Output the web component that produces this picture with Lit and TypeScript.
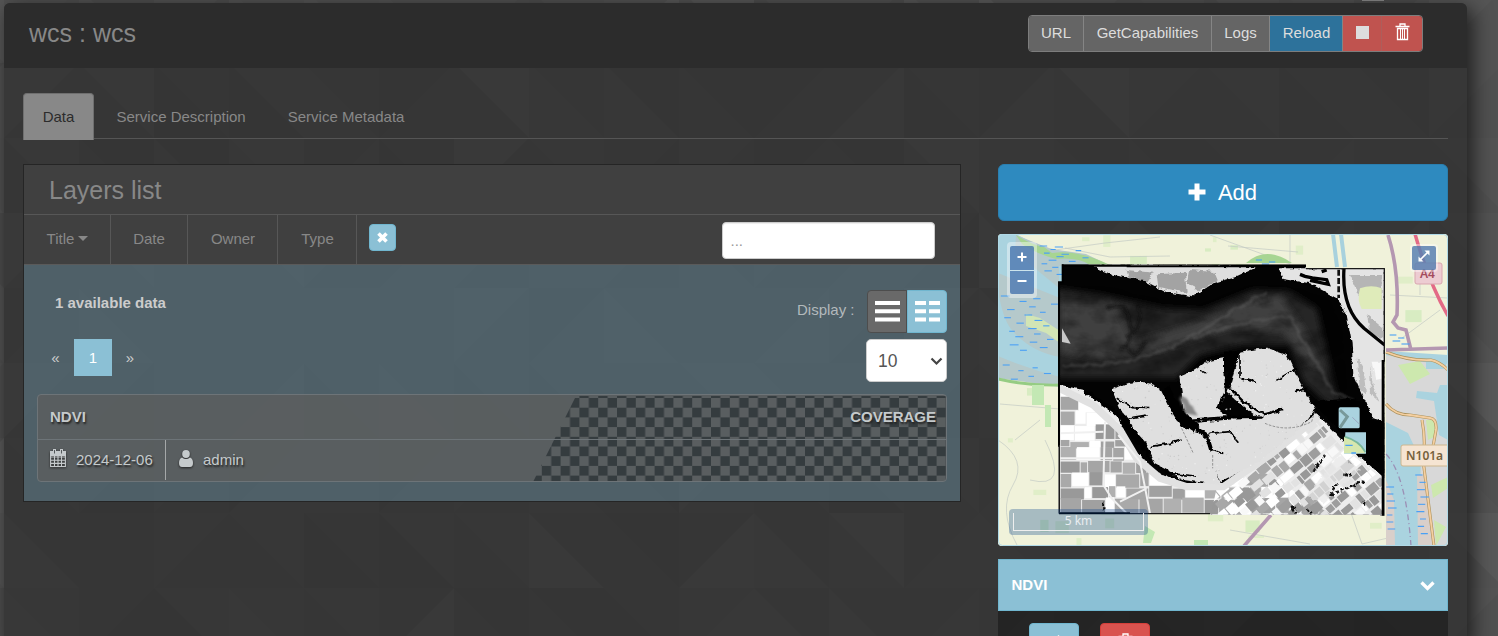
import { LitElement, html, svg, css } from "lit";
import { customElement } from "lit/decorators.js";

/* Small seeded generator so field patterns are stable between renders. */
function seeded(seed: number) {
  let s = seed;
  return () => {
    s = (s * 1664525 + 1013904223) % 4294967296;
    return s / 4294967296;
  };
}

@customElement("triangle-backdrop")
class TriangleBackdrop extends LitElement {
  static styles = css`
    :host { display: block; position: absolute; inset: 0; overflow: hidden; }
    svg { display: block; }
  `;
  render() {
    const rnd = seeded(41);
    const tris = [];
    const c = 75;
    for (let row = 0; row < 9; row++) {
      for (let col = -1; col < 20; col++) {
        const x = 4 + col * c;
        const y = -12 + row * c;
        const kind = Math.floor(rnd() * 4);
        const p = [
          `${x},${y} ${x + c},${y} ${x},${y + c}`,
          `${x},${y} ${x + c},${y} ${x + c},${y + c}`,
          `${x},${y + c} ${x + c},${y} ${x + c},${y + c}`,
          `${x},${y} ${x + c},${y + c} ${x},${y + c}`,
        ][kind];
        tris.push(svg`<rect x=${x} y=${y} width=${c} height=${c} fill="#fff" opacity=${rnd() * 0.016}/>
          <polygon points=${p} fill=${rnd() > 0.5 ? "#fff" : "#000"} opacity=${0.01 + rnd() * 0.045}/>`);
      }
    }
    return html`<svg width="1498" height="636">${tris}</svg>`;
  }
}

@customElement("coverage-map")
class CoverageMap extends LitElement {
  static styles = css`
    :host { display: block; position: relative; height: 312px; border-radius: 4px; overflow: hidden; background: #b5dbe8; }
    .canvas { display: block; width: 450px; height: 312px; }
    .zoom { position: absolute; left: 9px; top: 8px; width: 24px; padding: 4px 3px; border-radius: 4px; background: rgba(255,255,255,.4); display: flex; flex-direction: column; gap: 1px; }
    .ctl { display: grid; place-items: center; height: 24px; background: rgba(60,108,170,.75); border-radius: 2px 2px 0 0; padding-bottom: 2px; box-sizing: border-box; }
    .ctl.low { border-radius: 0 0 2px 2px; height: 23px; }
    .full { position: absolute; left: 412px; top: 10px; width: 24px; padding: 2px; border-radius: 4px; background: rgba(255,255,255,.4); }
    .full .ctl { border-radius: 2px; background: rgba(68,112,168,.75); padding-bottom: 4px; }
    .scale { position: absolute; left: 11px; top: 275px; width: 131px; height: 18px; padding: 4px; border-radius: 4px; background: rgba(0,60,136,.3); }
    .bar { border: 1px solid #eee; border-top: none; height: 17px; font: 12px/15px "Noto Sans", sans-serif; color: #e9edf1; text-align: center; }
  `;

  fields() {
    const rnd = seeded(77);
    const greys = ["#999", "#a5a5a5", "#b0b0b0", "#fff", "#a9a9a9", "#fff", "#a0a0a0"];
    const out = [];
    for (let y = 400; y < 775; ) {
      const h = 16 + rnd() * 32;
      for (let x = 32; x < 840; ) {
        const w = 22 + rnd() * 52;
        out.push(svg`<rect x=${x} y=${y + rnd() * 9} width=${w - 3} height=${h - 2} fill=${greys[Math.floor(rnd() * 7)]}/>`);
        x += w;
      }
      y += h;
    }
    return out;
  }

  diagonal() {
    const rnd = seeded(13);
    const greys = ["#989898", "#a8a8a8", "#f8f8f8", "#e2e2e2", "#fff", "#9e9e9e"];
    const out = [];
    for (let y = -30; y < 400; y += 32) {
      for (let x = -120; x < 520; ) {
        const w = 12 + rnd() * 30;
        out.push(svg`<rect x=${x} y=${y + rnd() * 7} width=${w - 3} height=${20 + rnd() * 10} fill=${greys[Math.floor(rnd() * 6)]}/>`);
        x += w;
      }
    }
    return out;
  }

  dashes(seed: number, n: number, x0: number, y0: number, w: number, h: number) {
    const rnd = seeded(seed);
    for (let k = 0; k < 5; k++) rnd();
    return Array.from({ length: n }, (_, i) => {
      const x = x0 + (((i * 0.618 + rnd() * 0.15) % 1) * w);
      const y = y0 + (h * i) / n;
      return svg`<path d="M${x} ${y}h${5 + rnd() * 4}" stroke="#4aa0f5" stroke-width="1.1"/>`;
    });
  }

  patches() {
    const rnd = seeded(8);
    return Array.from({ length: 75 }, () => svg`<rect x=${998 + rnd() * 440} y=${234 + rnd() * 305} width=${3 + rnd() * 14} height=${2 + rnd() * 10} fill=${rnd() > 0.3 ? "#d9edc0" : "#cdeab8"} opacity=".7"/>`);
  }

  specks() {
    const rnd = seeded(29);
    return Array.from({ length: 420 }, () => svg`<circle cx=${190 + rnd() * 600} cy=${285 + rnd() * 400} r=${0.8 + rnd() * 1.6} fill=${rnd() > 0.4 ? "#cacaca" : "#f0f0f0"}/>`);
  }

  render() {
    return html`
      <svg class="canvas" viewBox="998 234 450 312">
        <defs>
          <clipPath id="frame"><path d="M36 28H768V40H1004V782H990V779H480V776H25V82H36Z"/></clipPath>
          <clipPath id="left"><path d="M28 395L120 445L200 500L240 580L300 645L400 700L510 706L640 650L860 790H20Z"/></clipPath>
          <clipPath id="right"><path d="M500 700L620 635L800 490L870 570L1000 675V790H480Z"/></clipPath>
          <clipPath id="flats"><path d="M190 410Q230 375 285 385Q340 400 360 450L395 515 430 520 470 540 485 600 620 625 510 690 400 670 320 630 285 560 240 510 210 460zM388 365Q430 350 465 320L523 310 525 425 400 460zM570 290L650 278 710 300 735 355 795 465 740 530 620 625 510 680 490 620 540 360z"/></clipPath>
          <filter id="soft" x="-20%" y="-20%" width="140%" height="140%"><feGaussianBlur stdDeviation="10"/></filter>
          <filter id="wisp" x="-20%" y="-20%" width="140%" height="140%"><feTurbulence type="fractalNoise" baseFrequency=".03" numOctaves="3" seed="4"/><feDisplacementMap in="SourceGraphic" scale="22" xChannelSelector="R" yChannelSelector="G"/><feGaussianBlur stdDeviation="3"/></filter>
          <filter id="edge" x="-5%" y="-5%" width="110%" height="110%"><feTurbulence type="fractalNoise" baseFrequency=".06" numOctaves="3" seed="4"/><feDisplacementMap in="SourceGraphic" scale="14" xChannelSelector="R" yChannelSelector="G"/></filter>
          <filter id="haze" x="0" y="0" width="100%" height="100%"><feTurbulence type="fractalNoise" baseFrequency=".012 .02" numOctaves="4" seed="9"/><feColorMatrix values="0 0 0 0 0  0 0 0 0 0  0 0 0 0 0  2.4 0 0 0 -.9"/></filter>
          <mask id="body"><path d="M36 110L170 115L330 150L440 175L600 110L720 110L830 150L860 240L870 400L840 430L770 380L710 280H590L450 300L370 360L200 360L36 360Z" fill="#fff" filter="url(#soft)"/></mask>
        </defs>
        <rect x="998" y="234" width="450" height="312" fill="#f0f2da"/>
        ${this.patches()}
        <path d="M1010 238l45 12 50-7 55-6M1065 248l45 9 60-1M1210 235l80 29M1228 246l70 6M1290 235v30M1040 420l-25 20M1000 404l60 5M998 440q30 20 15 45t4 60M1030 480q40 10 15-40M1230 530l80 14M1350 510l12 34M1362 544l26-6M1390 295l58 3M1440 310l-38 28M1420 265v30" fill="none" stroke="#c3cac4" stroke-width=".7"/>
        <!-- western estuary -->
        <path d="M998 234h18l32 17 18 6 45 8-51 120-62-7z" fill="#aad3df"/>
        <path d="M1016 235l35 14 35 5 25 12h-52v22l-22-18-22-17zM998 273q25 10 62 25v59q-30-5-49-28-8-10-13-38zM998 356q30 13 62 21v10l-62-9z" fill="#b5c9cb"/>
        <path d="M1016 235q16 10 28 12l8 6q25-4 58 12h-20q-12-8-34-6-22-6-34-15" fill="#a7d592"/>
        <path d="M998 379q30 7 63 6" fill="none" stroke="#95cc83" stroke-width="3"/>
        <path d="M1026 314l14 4 20 13v12l-14-10-20-7z" fill="#d2e5b5"/>
        ${this.dashes(3, 9, 1037, 246, 20, 32)}
        ${this.dashes(6, 21, 1000, 296, 52, 57)}
        ${this.dashes(5, 6, 1000, 365, 50, 17)}
        ${this.dashes(15, 5, 1050, 247, 38, 18)}
        <!-- northern shore and canals -->
        <path d="M1246 263q20-18 46 0z" fill="#a7d592"/>
        <path d="M1333 234l4 33M1341 234l4 33" stroke="#a8d1dd" stroke-width="4"/>
        <!-- eastern town, river and roads -->
        <path d="M1386 352l62 7v187h-28l-34-90z" fill="#d8d8d8"/>
        <path d="M1386 351l62 4v9l-25-2-37-7z" fill="#aad3df"/>
        <path d="M1386 422l22 11 13 28-3 85h-24l-2-30-6-22z" fill="#aad3df"/>
        <path d="M1417 391l20 2 3-8h8v55l-9-5-5-34-18-3zM1426 359h20v10h-20z" fill="#aad3df"/>
        <path d="M1417 475h9l7 70h-15zM1386 480l8 20 1 45h-9z" fill="#d9cfca"/>
        <path d="M1398 365l22-4 10 13-20 10zM1426 420h10v16l-8 4zM1431 485l17-8v11l-15 10zM1434 520l12 7-10 19z" fill="#cde8ae"/>
        <path d="M1386 404q9 11 24 11l20 3q7 1 6 12l-4 22M1422 420q4 20 1 40l11 86M1386 352q22 9 45 8 9 2 17 10" fill="none" stroke="#ad925c" stroke-width="3"/>
        <path d="M1386 404q9 11 24 11l20 3q7 1 6 12l-4 22M1422 420q4 20 1 40l11 86M1386 352q22 9 45 8 9 2 17 10" fill="none" stroke="#f5cfa0" stroke-width="1.8"/>
        <path d="M1388 235q11 34 9 80l-4 7 5 6 8 2 5 20M1386 350l62-2M1244 546l27-31" fill="none" stroke="#b497b1" stroke-width="3.6"/>
        <path d="M1386 454q20 21 25 92" fill="none" stroke="#9b8fb5" stroke-width="1.3" stroke-dasharray="6 3 1 3"/>
        <path d="M1415 234q14 49 33 82" fill="none" stroke="#e36a86" stroke-width="3.5"/>
        ${this.dashes(31, 7, 1386, 487, 2, 49)}
        ${this.dashes(33, 9, 1415, 475, 6, 66)}
        ${this.dashes(35, 4, 1388, 335, 14, 12)}
        ${this.dashes(37, 3, 1255, 260, 20, 6)}
        <path d="M1032 385h12v20h-12zM1045 405h6v22h-6zM1145 526l10 6-4 11h-8zM1194 540h14v6h-14z" fill="#c3e8b4"/>
        <rect x="1415" y="263" width="27" height="21" rx="2" fill="#edccd2" stroke="#d9a6b0"/>
        <text x="1420" y="278" font-family="Noto Sans" font-size="12" font-weight="600" fill="#a34b5d">A4</text>
        <rect x="1401" y="445" width="50" height="21" rx="2" fill="#f5e4d2" stroke="#cdb68e"/>
        <text x="1406" y="460" font-family="Noto Sans" font-size="12" font-weight="600" fill="#76613c">N101a</text>
        <!-- coverage raster -->
        <g transform="translate(1050 255) scale(.33333)">
          <g clip-path="url(#frame)">
            <rect x="20" y="20" width="990" height="770" fill="#030303"/>
            <g filter="url(#soft)">
              <path d="M20 100L160 120L340 160L460 165L610 105L720 110L800 160L860 420L910 440L830 445L760 380L720 270H580L450 300L380 370L190 370L20 370Z" fill="#262626"/>
              <path d="M30 140L190 140L250 260L420 210L560 150L690 120L760 220L820 340L780 330L700 230L540 220L330 285L140 310L30 290Z" fill="#404040"/>
            </g>
            <g mask="url(#body)"><rect x="20" y="60" width="900" height="400" filter="url(#haze)" opacity=".35"/></g>
            <path d="M165 160q60-30 75 40t-30 80M260 150q30 50-30 100M220 270q40 50 70-10" fill="none" stroke="#101010" stroke-width="10" opacity=".6" filter="url(#wisp)"/>
            <path d="M40 330Q260 345 430 240T650 110M430 250Q600 190 720 185Q780 290 850 410l60 25" fill="none" stroke="#777" stroke-width="7" opacity=".35" filter="url(#wisp)"/>
            <path d="M36 220l26 46-26-5z" fill="#c8c8c8"/>
            <g filter="url(#edge)">
              <path d="M110 28L190 60 285 78 350 112 430 124 490 85 560 65 620 37 465 31z" fill="#dedede"/>
              <path d="M230 45l80 8-20 27-55-14zM320 58l85-5 5 60-85-17zM418 45l75 6 10 25-55 30-38-20z" fill="#a3a3a3"/>
              <path d="M690 40H1004V500L970 490 940 430 910 360 905 260 890 180 860 130 780 85 700 72z" fill="#e4e4e4"/>
              <path d="M900 60h95v75h-60zM950 180l50 40v30l-35-10z" fill="#b5b5b5"/>
              <path d="M920 310l20 20 8 90-18-15zM960 330l8 60 20 50-25-20z" fill="#bdbdbd"/>
              <path d="M965 320h36v50l-25 5z" fill="#f8f8f8"/>
              <path d="M20 388L100 405 200 480 240 570 310 645 410 690 510 700 620 620 740 530 800 475 870 550 1010 670V790H15z" fill="#ececec"/>
            </g>
            <g clip-path="url(#left)">${this.fields()}</g>
            <g clip-path="url(#right)"><g transform="translate(500 650) rotate(-40)">${this.diagonal()}</g></g>
            <path d="M28 400L130 450L210 525L260 610L330 670L410 695H520L660 600L805 485" fill="none" stroke="#e1e1e1" stroke-width="22"/>
            <path d="M165 500L160 690 185 730 230 775M205 540L270 620 300 775M30 535L160 530M30 610h190M210 740l80-40" fill="none" stroke="#f0f0f0" stroke-width="6"/>
            <path d="M870 600l60 45-110 100-50-20 60-80z" fill="#e9e9e9" opacity=".7" filter="url(#edge)"/>
            <g filter="url(#edge)" fill="#dfdfdf">
              <path d="M186 406Q230 375 285 382Q340 395 356 440L392 515L440 530 480 560 510 690 400 675 320 635 285 560 240 510 210 460z"/>
              <path d="M388 365Q430 350 465 320L523 310 525 425 507 460 530 485 430 500 400 460 395 410z"/>
              <path d="M570 290L650 278 710 300 735 355 760 400 795 465 740 530 620 625 510 680 490 620 470 535 430 505 620 485 530 410 545 360z"/>
            </g>
            <g clip-path="url(#flats)">${this.specks()}</g>
            <path d="M393 420l35 35 15 30-40-8z" fill="#888" filter="url(#wisp)"/>
            <g fill="none" stroke="#030303" filter="url(#edge)">
              <path d="M105 408L190 465 225 500" stroke-width="12"/>
              <path d="M215 480L250 540 285 580" stroke-width="20"/>
              <path d="M280 570L305 625 370 660" stroke-width="8"/>
              <path d="M345 400L370 450 395 490 440 520 " stroke-width="30"/>
              <path d="M430 515L470 540 485 590" stroke-width="12"/>
              <path d="M540 400L580 440 640 478 700 462M525 415L505 460 550 490 640 488 560 485 410 495" stroke-width="7"/>
              <path d="M560 290L530 400" stroke-width="16"/>
              <path d="M535 290v60" stroke-width="26"/>
              <path d="M570 300v70l50 12M475 535l65-5 25 30M480 585l40 10M300 575l60-10 35-10M350 655l90 8M200 430l50 28 45 3M230 490l60-10M680 375l60-35M735 410l35-10M450 345l20 12" stroke-width="5"/>
            </g>
            <path d="M395 520l35 75M488 600v40M645 505q70 30 140-5l10-35" fill="none" stroke="#777" stroke-width="2.2" stroke-dasharray="8 4"/>
            <path d="M882 40q-8 120 60 180l62 50" fill="none" stroke="#020202" stroke-width="10"/>
            <path d="M866 44v85" fill="none" stroke="#111" stroke-width="8" stroke-dasharray="18 7"/>
            <path d="M750 58l15 6 22 5M780 68l50 6 5 14-55-12M815 50l15-5" fill="none" stroke="#000" stroke-width="10"/>
            <path d="M930 100q35-12 65 0v62h-60q-15-25-5-62" fill="#dfebba"/>
            <path d="M785 440l85 90 60 75 74 65V500l-35-5-20-55-50-10z" fill="#060606" filter="url(#edge)"/>
            <path d="M790 650l35-50M840 720l20-35M840 720l110-45M880 655l25 8M942 740v15M728 755l8 20M770 760l15 18M160 740v30" stroke="#111" fill="none" stroke-width="7" stroke-dasharray="12 5" filter="url(#edge)"/>
          </g>
          <path d="M38 28V82H27V575M27 775H240M230 34H768M36 32H240" fill="none" stroke="#000" stroke-width="6"/>
          <path d="M28 570V775M240 776H480M768 41H1004M1003 40V320" fill="none" stroke="#1a1a1a" stroke-width="4"/>
          <path d="M999 315V782" fill="none" stroke="#000" stroke-width="8"/>
          <rect x="866" y="457" width="63" height="63" rx="5" fill="#aad3df"/>
          <path d="M870 465l22 20-22 33" fill="none" stroke="#78999a" stroke-width="9"/>
          <path d="M907 487l22 21" stroke="#9292b2" stroke-width="2"/>
          <path d="M886 532h62v64h-66z" fill="#aad3df"/>
          <path d="M882 545q50 15 64 50h-64z" fill="#d6e7ae"/>
          <path d="M884 545q45 13 62 46" fill="none" stroke="#79b79b" stroke-width="5"/>
          <path d="M886 571h22M904 594h14" stroke="#4aa0f5" stroke-width="4"/>
        </g>
        <rect x="998.5" y="234.5" width="449" height="311" rx="4" fill="none" stroke="#afd9e7"/>
      </svg>
      <div class="zoom">
        <div class="ctl"><svg width="10" height="10"><path d="M5 .5v9M.5 5h9" stroke="#fff" stroke-width="2"/></svg></div>
        <div class="ctl low"><svg width="10" height="10"><path d="M.5 4h9" stroke="#fff" stroke-width="2"/></svg></div>
      </div>
      <div class="full"><div class="ctl"><svg width="12" height="12" viewBox="0 0 12 12"><path d="M2 10L10 2" stroke="#fff" stroke-width="1.7"/><path d="M6.5.5h5v5zM.5 6.5v5h5z" fill="#fff"/></svg></div></div>
      <div class="scale"><div class="bar">5 km</div></div>`;
  }
}

@customElement("app-root")
class AppRoot extends LitElement {
  static styles = css`
    :host { display: block; position: relative; box-sizing: border-box; height: 636px; overflow: hidden; padding: 3px 31px 0 4px; background: #505050; font: 15px/21px "Liberation Sans", Arial, sans-serif; color: #888; }
    * { box-sizing: border-box; }
    svg { display: block; }
    .peek { position: absolute; left: 1362px; top: 0; width: 22px; height: 1px; background: #8a8a8a; }
    .panel { position: relative; height: 640px; border-radius: 6px 6px 0 0; background: rgba(45,45,45,.72); box-shadow: 5px 5px 20px rgba(0,0,0,.65); }
    header { height: 65px; padding: 12px 44px 0 25px; display: flex; justify-content: space-between; align-items: flex-start; background: #2c2c2c; border-radius: 6px 6px 0 0; }
    h1 { margin: 0; padding-top: 3px; font-size: 25px; line-height: 30px; font-weight: 400; }
    .actions { display: flex; width: 395px; height: 37px; border: 1px solid #7d7d7d; border-radius: 4px; overflow: hidden; color: #ddd; }
    .actions > div { display: grid; place-items: center; border-right: 1px solid #858585; background: #656565; padding-bottom: 2px; }
    .actions .url { width: 55px; } .actions .cap { width: 128px; } .actions .logs { width: 58px; }
    .actions .reload { width: 73px; background: #2d729b; padding-left: 1px; }
    .actions .stop { width: 39px; background: #c0534f; border-color: #ad5e5b; }
    .actions .trash { flex: 1; background: #c0534f; border: none; padding-bottom: 3px; }
    .square { width: 13px; height: 13px; background: #ddd; }
    .body { padding: 26px 19px 0; }
    .tabs { display: flex; height: 45px; border-bottom: 1px solid #555; }
    .tab { width: 71px; padding-top: 12px; text-align: center; border: 1px solid #6f6f6f; border-bottom: none; border-radius: 4px 4px 0 0; background: #888; color: #2c2c2c; margin-top: -1px; height: 47px; }
    .link { padding-top: 12px; margin-left: 22.5px; }
    .link + .link { margin-left: 42px; }
    .columns { display: grid; grid-template-columns: 938px 450px; justify-content: space-between; margin-top: 25px; }
    .layers { height: 338px; border: 1px solid #252525; }
    .layers h2 { margin: 0; height: 50px; padding: 10px 25px 0; background: #404040; border-bottom: 1px solid #575757; font-size: 25px; line-height: 31px; font-weight: 400; }
    .filters { display: flex; height: 50px; background: #404040; border-bottom: 1px solid #5a5a5a; padding-right: 25px; }
    .filters > .f { border-right: 1px solid #575757; padding: 13px 0 0 1px; text-align: center; }
    .filters > .f2 { padding-left: 0; }
    .f1 { width: 87px; } .f2 { width: 77px; } .f3 { width: 90px; } .f4 { width: 79px; }
    .f1 i { display: inline-block; border: 5px solid transparent; border-top-color: #888; border-bottom: 0; vertical-align: 3px; margin-left: 4px; }
    .clear { width: 27px; height: 27px; margin: 9px 0 0 12px; display: grid; place-items: center; background: #8bc0d5; border: 1px solid #70b6cf; border-radius: 4px; }
    .search { width: 213px; height: 37px; margin: 7px 0 0 auto; border: 1px solid #ccc; border-radius: 4px; background: #fff; color: #999; padding: 7px 7.5px; box-shadow: inset 0 1px 1px rgba(0,0,0,.075); }
    .list { height: 236px; padding: 25px 13px 0; background: rgba(103,138,153,.5); }
    .top { display: flex; align-items: flex-start; color: #b3b9bc; }
    .top b { padding: 2px 0 0 18px; color: #ccc; }
    .display { margin: 9px 12.5px 0 auto; }
    .toggle { display: flex; width: 80px; height: 43px; }
    .toggle > div { width: 40px; display: grid; place-items: center; padding-left: 1px; }
    .rows { background: #696969; border: 1px solid #4d4d4d; border-radius: 4px 0 0 4px; }
    .cells { background: #8bc0d5; border: 1px solid #70b6cf; border-radius: 0 4px 4px 0; }
    .paging { display: flex; margin-top: 6px; color: #ccc; }
    .paging span { width: 37px; padding-top: 8px; text-align: center; }
    .paging .cur { width: 38px; height: 37px; background: #8bc0d5; color: #fff; }
    .paging .next { width: 36px; }
    .size { width: 81px; height: 43px; margin-left: auto; display: flex; align-items: center; justify-content: space-between; padding: 1px 3px 0 11px; border: 1px solid #ccc; border-radius: 5px; background: #fff; color: #555; font-size: 17.5px; }
    .item { position: relative; height: 88px; margin-top: 12px; width: 910px; border: 1px solid #6d7478; border-radius: 4px; background: rgba(98,92,90,.55); overflow: hidden; color: #c5cacc; text-shadow: 1px 2px 2px #222; }
    .checker { position: absolute; right: 0; top: 1px; }
    .head, .meta { position: relative; display: flex; }
    .head { height: 45px; padding: 11px 10px 0 12px; justify-content: space-between; border-bottom: 1px solid #6d7478; font-weight: 700; }
    .date { display: flex; gap: 10px; width: 128px; height: 40px; padding: 9px 0 0 12px; border-right: 1px solid #a5a8a9; }
    .user { display: flex; gap: 10px; padding: 9px 0 0 13px; }
    .ico { filter: drop-shadow(0 1px 1px #222); }
    .add { height: 57px; margin-bottom: 13px; display: flex; align-items: center; justify-content: center; gap: 12px; border: 1px solid #2a7fb0; border-radius: 6px; background: #2e8abf; color: #fff; font-size: 22px; padding: 0 1px 1px 0; }
    .bar { display: flex; align-items: center; justify-content: space-between; height: 52px; margin-top: 13px; padding: 0 12.5px 1px; background: #8bc0d5; border: 1px solid #70b6cf; color: #fff; font-weight: 700; }
    .tools { display: flex; gap: 21px; height: 60px; padding: 12px 31px; background: rgba(28,28,28,.65); }
    .tools > div { width: 50px; height: 37px; border-radius: 4px; background: #8bc0d5; border: 1px solid #70b6cf; display: grid; place-items: start center; padding-top: 9px; }
    .tools .del { background: #d9534f; border-color: #d43f3a; }
  `;

  trash() {
    return svg`<g fill="none" stroke="#fff"><path d="M5 3V1h5v2M.5 3.5h14M2.5 5.5v11h10v-11z" stroke-width="1.3"/><path d="M5.5 6v10M7.5 6v10M9.500 6v10" stroke-width="1"/></g>`;
  }

  render() {
    return html`
      <triangle-backdrop></triangle-backdrop>
      <div class="peek"></div>
      <main class="panel">
        <header>
          <h1>wcs : wcs</h1>
          <div class="actions">
            <div class="url">URL</div><div class="cap">GetCapabilities</div><div class="logs">Logs</div>
            <div class="reload">Reload</div>
            <div class="stop"><span class="square"></span></div>
            <div class="trash"><svg width="15" height="18">${this.trash()}</svg></div>
          </div>
        </header>
        <div class="body">
          <nav class="tabs"><div class="tab">Data</div><div class="link">Service Description</div><div class="link">Service Metadata</div></nav>
          <div class="columns">
            <section class="layers">
              <h2>Layers list</h2>
              <div class="filters">
                <div class="f f1">Title<i></i></div><div class="f f2">Date</div><div class="f f3">Owner</div><div class="f f4">Type</div>
                <div class="clear"><svg width="11" height="11"><path d="M1.5 1.5l8 8M9.5 1.5l-8 8" stroke="#fff" stroke-width="3.6"/></svg></div>
                <div class="search">...</div>
              </div>
              <div class="list">
                <div class="top">
                  <b>1 available data</b><span class="display">Display :</span>
                  <div class="toggle">
                    <div class="rows"><svg width="25" height="21"><path d="M0 2h25M0 10.3h25M0 18.4h25" stroke="#fff" stroke-width="4"/></svg></div>
                    <div class="cells"><svg width="25" height="21"><path d="M0 2h11M14 2h11M0 10.3h11M14 10.3h11M0 18.4h11M14 18.4h11" stroke="#fff" stroke-width="4"/></svg></div>
                  </div>
                </div>
                <div class="paging">
                  <span>«</span><span class="cur">1</span><span class="next">»</span>
                  <div class="size">10<svg width="13" height="9"><path d="M1.5 1.5l5 5 5-5" fill="none" stroke="#444" stroke-width="2.2"/></svg></div>
                </div>
                <article class="item">
                  <svg class="checker" width="414" height="86">
                    <defs><pattern id="ck" width="18.8" height="19.4" patternUnits="userSpaceOnUse" x="9.8" y="2"><path d="M9.4 0h9.4v9.7H9.4zM0 9.7h9.4v9.7H0z" fill="#353c3f"/></pattern></defs>
                    <path d="M44 0H414V86H1z" fill="url(#ck)"/>
                  </svg>
                  <div class="head"><span>NDVI</span><span>COVERAGE</span></div>
                  <div class="meta">
                    <div class="date"><svg class="ico" width="16" height="20" viewBox="0 0 16 20"><path d="M.6 4.5h14.8v13H.6zM1 8h14M1 11.2h14M1 14.4h14M4.5 7v10M8 7v10M11.5 7v10" fill="none" stroke="#c5cacc" stroke-width="1.1"/><path d="M0 2h16v5H0zM3 0h3v5H3zM10 0h3v5h-3z" fill="#c5cacc"/><path d="M4.5 1v3.5M11.5 1v3.5" stroke="#555a5c"/></svg>2024-12-06</div>
                    <div class="user"><svg class="ico" width="14" height="19" viewBox="0 0 14 19"><ellipse cx="7" cy="5" rx="3.8" ry="4" fill="#c5cacc"/><path d="M3 8.5q4 3 8 0 3 1 3 5.5 0 4-3 4H3q-3 0-3-4 0-4.5 3-5.5" fill="#c5cacc"/></svg>admin</div>
                  </div>
                </article>
              </div>
            </section>
            <aside>
              <div class="add"><svg width="18" height="18"><path d="M9 .5v17M.5 9h17" stroke="#fff" stroke-width="5"/></svg>Add</div>
              <coverage-map></coverage-map>
              <div class="bar">NDVI<svg width="15" height="12"><path d="M1.5 3.5l6 6 6-6" fill="none" stroke="#fff" stroke-width="3.3"/></svg></div>
              <div class="tools"><div><svg width="16" height="16"><path d="M12.5 2l2 2-9 9-3 1 1-3z" fill="#fff"/></svg></div><div class="del"><svg width="15" height="18">${this.trash()}</svg></div></div>
            </aside>
          </div>
        </div>
      </main>`;
  }
}
